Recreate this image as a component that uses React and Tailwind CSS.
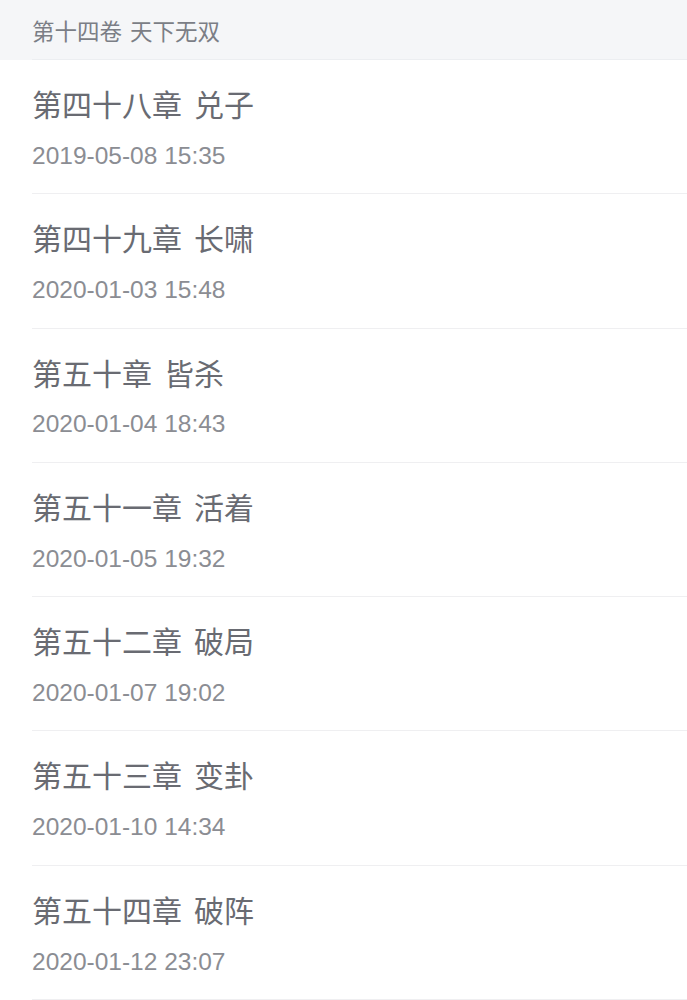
import React from "react";

const rows = [
  ["第四十八章", "兑子", "2019-05-08 15:35"],
  ["第四十九章", "长啸", "2020-01-03 15:48"],
  ["第五十章", "皆杀", "2020-01-04 18:43"],
  ["第五十一章", "活着", "2020-01-05 19:32"],
  ["第五十二章", "破局", "2020-01-07 19:02"],
  ["第五十三章", "变卦", "2020-01-10 14:34"],
  ["第五十四章", "破阵", "2020-01-12 23:07"],
];

export default function App() {
  return (
    <div className="w-[687px] h-[1000px] overflow-hidden bg-white" style={{ fontFamily: '"Noto Sans CJK SC", "Noto Sans", sans-serif' }}>
      <div className="h-[60px] bg-[#f5f6f8] flex items-center pl-[32px] gap-[8px] text-[22.5px] leading-none text-[#7b7e86]">
        <span>第十四卷</span>
        <span>天下无双</span>
      </div>
      <div className="ml-[32px] h-px bg-[#eceef1] -mt-px" />
      {rows.map(([a, b, d], i) => (
        <div key={i} className="h-[134.3px] flex flex-col ml-[32px] border-b border-[#efeff1]">
          <div className="mt-[23px] h-[40px] flex items-center gap-[12px] text-[30px] leading-none text-[#696b72]">
            <span>{a}</span>
            <span>{b}</span>
          </div>
          <div className="mt-[18px] h-[30px] flex items-center text-[24.5px] leading-none text-[#8b8d93]" style={{ fontFamily: '"Liberation Sans", Arial, sans-serif' }}>{d}</div>
        </div>
      ))}
    </div>
  );
}
